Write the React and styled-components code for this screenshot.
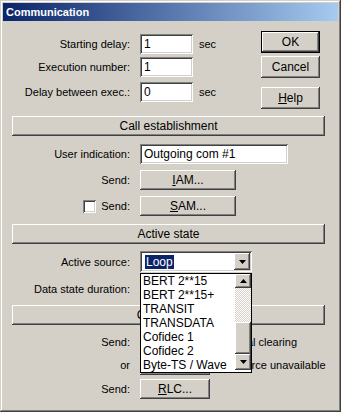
import React from 'react';
import styled, { createGlobalStyle, css } from 'styled-components';

const GlobalStyle = createGlobalStyle`
  body {
    margin: 0;
    background: #d4d0c8;
    font-family: "Liberation Sans", Arial, sans-serif;
    font-size: 11px;
    color: #000;
  }
`;

const raised = css`
  box-shadow: inset -1px -1px #404040, inset 1px 1px #fff,
    inset -2px -2px #808080, inset 2px 2px #d4d0c8;
`;

const sunken = css`
  box-shadow: inset 1px 1px #808080, inset -1px -1px #fff,
    inset 2px 2px #404040, inset -2px -2px #d4d0c8;
`;

const Window = styled.div`
  position: relative;
  width: 341px;
  height: 412px;
  box-sizing: border-box;
  padding: 3px;
  background: #d4d0c8;
  box-shadow: inset -1px -1px #404040, inset 1px 1px #d4d0c8,
    inset -2px -2px #808080, inset 2px 2px #fff;
  overflow: hidden;
`;

const TitleBar = styled.div`
  height: 18px;
  display: flex;
  align-items: center;
  padding-left: 3px;
  background: linear-gradient(to right, #0a246a, #a6caf0);
  color: #fff;
  font-weight: 700;
  font-size: 11px;
`;

const Top = styled.div`
  display: flex;
  justify-content: space-between;
`;

const Form = styled.div`
  padding-top: 13px;
`;

const Row = styled.div`
  display: grid;
  grid-template-columns: 127px auto 1fr;
  column-gap: 10px;
  align-items: center;
  margin-top: ${(p) => p.$mt || 0}px;
  height: ${(p) => p.$h || 20}px;
`;

const Label = styled.div`
  display: flex;
  justify-content: flex-end;
  align-items: center;
  gap: 5px;
  white-space: nowrap;
`;

const Field = styled.div`
  ${sunken};
  background: #fff;
  width: ${(p) => p.$w}px;
  height: 100%;
  box-sizing: border-box;
  padding-left: 4px;
  display: flex;
  align-items: center;
  font-size: 12px;
`;

const Unit = styled.span`
  margin-left: -4px;
`;

const Side = styled.div`
  display: flex;
  flex-direction: column;
  padding-top: 10px;
  margin-right: 18px;
`;

const Button = styled.div`
  ${raised};
  width: ${(p) => p.$w}px;
  height: ${(p) => p.$h || 20}px;
  margin-top: ${(p) => p.$mt || 0}px;
  box-sizing: border-box;
  display: flex;
  align-items: center;
  justify-content: center;
  white-space: nowrap;
  font-size: 12px;
  ${(p) =>
    p.$default &&
    css`
      border: 1px solid #000;
    `}
`;

const Header = styled.div`
  ${raised};
  height: 20px;
  margin: ${(p) => p.$mt}px 13px 0 9px;
  display: flex;
  align-items: center;
  justify-content: center;
  font-size: 12px;
`;

const Check = styled.span`
  ${sunken};
  display: inline-block;
  width: 13px;
  height: 13px;
  background: #fff;
`;

const Extra = styled.div`
  display: flex;
  align-items: center;
  gap: 3px;
  margin-left: ${(p) => p.$ml || 0}px;
  white-space: nowrap;
`;

const Combo = styled.div`
  ${sunken};
  position: relative;
  width: 112px;
  height: 21px;
  box-sizing: border-box;
  background: #fff;
  display: flex;
  align-items: center;
  padding: 2px;
`;

const Selected = styled.span`
  flex: 1;
  margin-left: 3px;
  font-size: 12px;
  span {
    background: #0a246a;
    color: #fff;
    padding: 0 1px;
  }
`;

const ArrowBtn = styled.div`
  ${raised};
  width: 16px;
  height: ${(p) => p.$h || 17}px;
  flex: none;
  display: flex;
  align-items: center;
  justify-content: center;
  background: #d4d0c8;
`;

const List = styled.div`
  position: absolute;
  top: 22px;
  left: 0;
  width: 112px;
  height: 100px;
  box-sizing: border-box;
  border: 1px solid #000;
  background: #fff;
  display: flex;
  z-index: 2;
`;

const Items = styled.div`
  flex: 1;
`;

const Item = styled.div`
  height: 14px;
  line-height: 14px;
  padding-left: 2px;
  font-size: 12px;
  white-space: nowrap;
`;

const ScrollBar = styled.div`
  width: 16px;
  display: flex;
  flex-direction: column;
`;

const Track = styled.div`
  height: ${(p) => p.$h}px;
  background-color: #d4d0c8;
  background-image: repeating-conic-gradient(#fff 0 25%, #d4d0c8 0 50%);
  background-size: 2px 2px;
`;

const Thumb = styled.div`
  ${raised};
  height: 32px;
  background: #d4d0c8;
`;

const Arrow = ({ up }) => (
  <svg width="7" height="4" viewBox="0 0 7 4">
    <polygon points={up ? '3.5,0 7,4 0,4' : '0,0 7,0 3.5,4'} fill="#000" />
  </svg>
);

const sources = [
  'BERT 2**15',
  'BERT 2**15+',
  'TRANSIT',
  'TRANSDATA',
  'Cofidec 1',
  'Cofidec 2',
  'Byte-TS / Wave',
];

const App = () => (
  <>
    <GlobalStyle />
    <Window>
      <TitleBar>Communication</TitleBar>
      <Top>
        <Form>
          <Row>
            <Label>Starting delay:</Label>
            <Field $w={53}>1</Field>
            <Unit>sec</Unit>
          </Row>
          <Row $mt={3}>
            <Label>Execution number:</Label>
            <Field $w={53}>1</Field>
          </Row>
          <Row $mt={5}>
            <Label>Delay between exec.:</Label>
            <Field $w={53}>0</Field>
            <Unit>sec</Unit>
          </Row>
        </Form>
        <Side>
          <Button $w={59} $h={22} $default>OK</Button>
          <Button $w={59} $h={22} $mt={3}>Cancel</Button>
          <Button $w={59} $h={22} $mt={9}>
            <u>H</u>elp
          </Button>
        </Side>
      </Top>

      <Header $mt={7}>Call establishment</Header>
      <Row $mt={8}>
        <Label>User indication:</Label>
        <Field $w={148}>Outgoing com #1</Field>
      </Row>
      <Row $mt={6}>
        <Label>Send:</Label>
        <Button $w={96}>
          <u>I</u>AM...
        </Button>
      </Row>
      <Row $mt={6}>
        <Label>
          <Check />
          Send:
        </Label>
        <Button $w={96}>
          <u>S</u>AM...
        </Button>
      </Row>

      <Header $mt={8}>Active state</Header>
      <Row $mt={7} $h={21}>
        <Label>Active source:</Label>
        <Combo>
          <Selected>
            <span>Loop</span>
          </Selected>
          <ArrowBtn>
            <Arrow />
          </ArrowBtn>
          <List>
            <Items>
              {sources.map((s) => (
                <Item key={s}>{s}</Item>
              ))}
            </Items>
            <ScrollBar>
              <ArrowBtn $h={14}>
                <Arrow up />
              </ArrowBtn>
              <Track $h={34} />
              <Thumb />
              <ArrowBtn $h={16}>
                <Arrow />
              </ArrowBtn>
            </ScrollBar>
          </List>
        </Combo>
      </Row>
      <Row $mt={7}>
        <Label>Data state duration:</Label>
        <Field $w={53} />
      </Row>

      <Header $mt={6}>Call release</Header>
      <Row $mt={7}>
        <Label>Send:</Label>
        <Button $w={70} />
        <Extra>Normal clearing</Extra>
      </Row>
      <Row $mt={3}>
        <Label>or</Label>
        <Button $w={70} />
        <Extra $ml={-4}>
          <Check />
          Source unavailable
        </Extra>
      </Row>
      <Row $mt={4}>
        <Label>Send:</Label>
        <Button $w={70}>
          <u>R</u>LC...
        </Button>
      </Row>
    </Window>
  </>
);

export default App;
